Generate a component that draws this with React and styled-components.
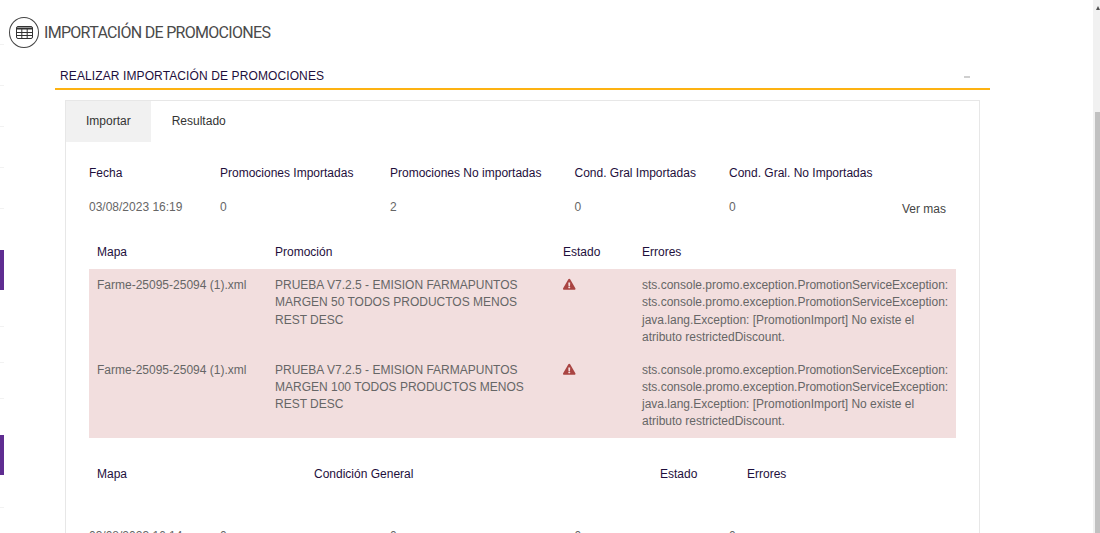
import React from 'react'
import styled, { createGlobalStyle } from 'styled-components'
import { FaExclamationTriangle } from 'react-icons/fa'

const GlobalStyle = createGlobalStyle`
  html, body {
    margin: 0;
    height: 100%;
    overflow: hidden;
    background: #fff;
    font-family: "Liberation Sans", Arial, sans-serif;
    font-size: 12px;
    line-height: 1.42857;
    color: #666;
  }
`

const Shell = styled.div`
  display: flex;
  height: 533px;
  overflow: hidden;
`

const Rail = styled.div`
  flex: 0 0 4px;
  display: flex;
  flex-direction: column;
`

const RailLine = styled.div`
  height: 1px;
  margin-top: ${p => p.$top}px;
  background: #f2f2f2;
`

const RailMark = styled.div`
  height: 40px;
  margin-top: ${p => p.$top}px;
  background: #5f2d91;
`

const Main = styled.main`
  flex: 1;
  min-width: 0;
  padding: 17px 0 0 5px;
`

const PageTitle = styled.div`
  display: flex;
  align-items: center;
  gap: 5px;
  height: 30px;
`

const TitleBadge = styled.span`
  box-sizing: border-box;
  width: 30px;
  height: 31px;
  border: 1px solid #444;
  border-radius: 50%;
  display: flex;
  align-items: center;
  justify-content: center;
`

const TitleText = styled.h1`
  margin: 2px 0 0;
  font-family: Roboto, "Liberation Sans", sans-serif;
  font-size: 16px;
  font-weight: 400;
  letter-spacing: -0.7px;
  color: #4a4a4a;
`

const Section = styled.section`
  width: 935px;
  margin: 13px 0 0 46px;
`

const SectionHeader = styled.div`
  display: flex;
  align-items: center;
  justify-content: space-between;
  height: 28px;
  padding: 0 20px 0 5px;
  border-bottom: 2px solid #fdb212;
`

const SectionTitle = styled.h2`
  margin: 6px 0 0;
  font-size: 12px;
  font-weight: 400;
  letter-spacing: 0.11px;
  color: #1e0f3c;
`

const Collapse = styled.span`
  width: 6px;
  height: 2px;
  margin-top: 6px;
  background: #cfcfcf;
`

const Card = styled.div`
  box-sizing: border-box;
  width: 915px;
  height: 600px;
  margin: 10px 0 0 10px;
  border: 1px solid #e7e7e7;
`

const Tabs = styled.div`
  display: flex;
  gap: 1px;
  height: 41px;
`

const Tab = styled.div`
  display: flex;
  align-items: center;
  padding: 0 20px;
  color: #333;
  background: ${p => (p.$active ? '#f1f1f1' : 'transparent')};
`

const Body = styled.div`
  padding: 22px 23px 0;
`

const SummaryRow = styled.div`
  display: grid;
  grid-template-columns: 131px 170px 184.5px 154.5px 173px 1fr;
  grid-template-rows: 20px;
  align-items: center;
  margin-top: ${p => p.$top || 0}px;
  color: ${p => (p.$head ? '#1e0f3c' : '#666')};
`

const VerMas = styled.span`
  align-self: start;
  margin-top: 3px;
  color: #444;
`

const Grid = styled.div`
  display: grid;
  grid-template-columns: ${p => p.$columns};
  padding: 0 8px;
`

const HeadRow = styled(Grid)`
  align-items: center;
  margin-top: ${p => p.$top}px;
  height: 34px;
  color: #1e0f3c;
`

const ErrorRow = styled(Grid)`
  margin-top: ${p => p.$top || 0}px;
  padding-top: 8px;
  padding-bottom: 7.5px;
  line-height: 17.25px;
  background: #f2dede;
  color: #666;
`

const Cell = styled.span`
  padding-right: ${p => p.$pad || 0}px;
`

const Warn = styled(FaExclamationTriangle)`
  display: block;
  margin-top: 1px;
  color: #a94442;
  font-size: 12.5px;
`

const Scrollbar = styled.div`
  flex: 0 0 7px;
  background: #f1f1f1;
  display: flex;
  flex-direction: column;
  align-items: flex-end;
`

const ScrollArrow = styled.span`
  width: 0;
  height: 0;
  margin: 6px 0 102px;
  border-left: 2.5px solid transparent;
  border-right: 2.5px solid transparent;
  border-bottom: 4px solid #505050;
`

const ScrollThumb = styled.div`
  width: 5px;
  flex: 1;
  background: #c1c1c1;
`

const TableIcon = () => (
  <svg width="17" height="13" viewBox="0 0 17 13" fill="none" stroke="#333" strokeWidth="1">
    <rect x="0.5" y="0.5" width="16" height="12" rx="1.5" />
    <path d="M0.5 2.5h16" strokeWidth="2" />
    <path d="M0.5 6.5h16M0.5 9.5h16M5.8 3v9.5M11.2 3v9.5" />
  </svg>
)

const promoColumns = '178px 288px 79px 1fr'
const condColumns = '217px 346px 87px 1fr'

const errorText =
  'sts.console.promo.exception.PromotionServiceException: sts.console.promo.exception.PromotionServiceException: java.lang.Exception: [PromotionImport] No existe el atributo restrictedDiscount.'

const promos = [
  { file: 'Farme-25095-25094 (1).xml', name: 'PRUEBA V7.2.5 - EMISION FARMAPUNTOS MARGEN 50 TODOS PRODUCTOS MENOS REST DESC' },
  { file: 'Farme-25095-25094 (1).xml', name: 'PRUEBA V7.2.5 - EMISION FARMAPUNTOS MARGEN 100 TODOS PRODUCTOS MENOS REST DESC' },
]

const App = () => (
  <Shell>
    <GlobalStyle />
    <Rail>
      <RailLine $top={44} />
      <RailLine $top={40} />
      <RailLine $top={40} />
      <RailLine $top={40} />
      <RailLine $top={40} />
      <RailMark $top={41} />
      <RailLine $top={36} />
      <RailLine $top={35} />
      <RailLine $top={35} />
      <RailMark $top={36} />
      <RailLine $top={32} />
    </Rail>
    <Main>
      <PageTitle>
        <TitleBadge>
          <TableIcon />
        </TitleBadge>
        <TitleText>IMPORTACIÓN DE PROMOCIONES</TitleText>
      </PageTitle>
      <Section>
        <SectionHeader>
          <SectionTitle>REALIZAR IMPORTACIÓN DE PROMOCIONES</SectionTitle>
          <Collapse />
        </SectionHeader>
        <Card>
          <Tabs>
            <Tab $active>Importar</Tab>
            <Tab>Resultado</Tab>
          </Tabs>
          <Body>
            <SummaryRow $head>
              <span>Fecha</span>
              <span>Promociones Importadas</span>
              <span>Promociones No importadas</span>
              <span>Cond. Gral Importadas</span>
              <span>Cond. Gral. No Importadas</span>
            </SummaryRow>
            <SummaryRow $top={14}>
              <span>03/08/2023 16:19</span>
              <span>0</span>
              <span>2</span>
              <span>0</span>
              <span>0</span>
              <VerMas>Ver mas</VerMas>
            </SummaryRow>
            <HeadRow $columns={promoColumns} $top={18}>
              <span>Mapa</span>
              <span>Promoción</span>
              <span>Estado</span>
              <span>Errores</span>
            </HeadRow>
            {promos.map((promo, i) => (
              <ErrorRow key={i} $columns={promoColumns} $top={i === 0 ? -1 : 0}>
                <Cell>{promo.file}</Cell>
                <Cell $pad={20}>{promo.name}</Cell>
                <Cell>
                  <Warn />
                </Cell>
                <Cell>{errorText}</Cell>
              </ErrorRow>
            ))}
            <HeadRow $columns={condColumns} $top={20}>
              <span>Mapa</span>
              <span>Condición General</span>
              <span>Estado</span>
              <span>Errores</span>
            </HeadRow>
            <SummaryRow $top={35}>
              <span>03/08/2023 16:14</span>
              <span>0</span>
              <span>0</span>
              <span>0</span>
              <span>0</span>
            </SummaryRow>
          </Body>
        </Card>
      </Section>
    </Main>
    <Scrollbar>
      <ScrollArrow />
      <ScrollThumb />
    </Scrollbar>
  </Shell>
)

export default App
